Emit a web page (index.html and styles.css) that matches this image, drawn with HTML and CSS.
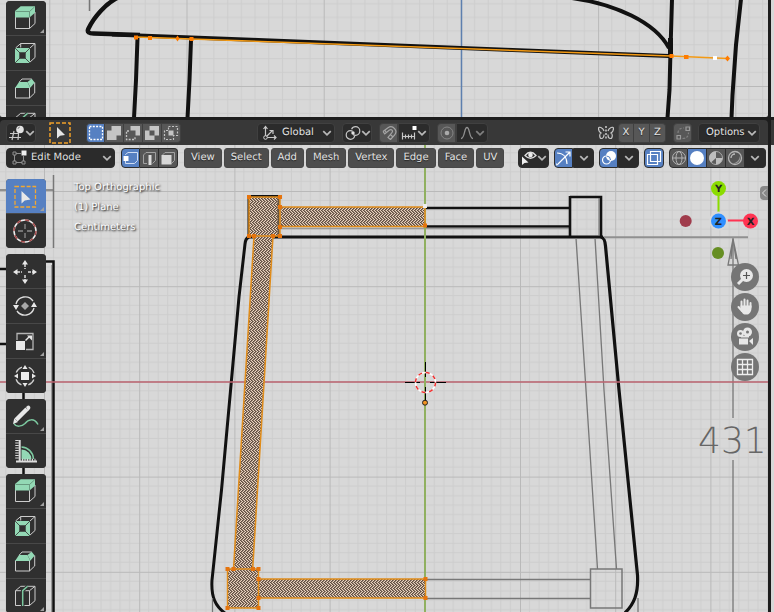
FILE: index.html
```html
<!DOCTYPE html>
<html lang="en">
<head>
<meta charset="utf-8">
<title>3D Viewport</title>
<link rel="stylesheet" href="styles.css">
</head>
<body>
<svg class="defs" aria-hidden="true">
  <defs>
    <pattern id="grid-front" x="49.3" y="86" width="137.2" height="137.2" patternUnits="userSpaceOnUse">
      <path class="minor" d="M13.7 0V138M27.4 0V138M41.2 0V138M54.9 0V138M68.6 0V138M82.3 0V138M96 0V138M109.8 0V138M123.5 0V138M0 13.7H138M0 27.4H138M0 41.2H138M0 54.9H138M0 68.6H138M0 82.3H138M0 96H138M0 109.8H138M0 123.5H138"/>
      <path class="major" d="M.5 0V138M0 .5H138"/>
    </pattern>
    <pattern id="grid-top" x="44" y="191" width="95.2" height="95.2" patternUnits="userSpaceOnUse">
      <path class="minor" d="M9.5 0V96M19 0V96M28.5 0V96M38 0V96M47.6 0V96M57 0V96M66.6 0V96M76 0V96M85.6 0V96M0 9.5H96M0 19H96M0 28.5H96M0 38H96M0 47.6H96M0 57H96M0 66.6H96M0 76H96M0 85.6H96"/>
      <path class="major" d="M.5 0V96M0 .5H96"/>
    </pattern>
    <pattern id="face" width="3" height="6" patternUnits="userSpaceOnUse" shape-rendering="crispEdges">
      <rect width="3" height="6" fill="#ead3c0"/>
      <path fill="#5e4c40" d="M0 0h1v1h-1zM1 1h1v1h-1zM2 2h1v1h-1zM0 3h1v1h-1zM2 4h1v1h-1zM1 5h1v1h-1z"/>
      <path fill="#948070" d="M1 0h1v1h-1zM2 1h1v1h-1zM0 2h1v1h-1zM1 3h1v1h-1zM0 4h1v1h-1zM2 5h1v1h-1z"/>
    </pattern>
    <symbol id="chevron" viewBox="0 0 8 8"><path d="M1 2.5 4 5.5 7 2.5" fill="none" stroke="currentColor" stroke-width="1.4"/></symbol>
    <symbol id="extrude" viewBox="0 0 40 34">
      <path class="wire" d="M9.5 15.5v12h14v-12M23.5 27.500l5.500-5V11"/>
      <path class="mint" d="M9 10l5.700-4.700H29v6.400L23.500 16.500H9z"/>
      <path d="M9.500 10.500h14l5.200-4.700M23.500 10.500v6" fill="none" stroke="#5d8a72" stroke-width=".8"/>
    </symbol>
    <symbol id="inset" viewBox="0 0 40 34">
      <path class="wire" d="M9.500 12 14.700 7.500H29v14l-5.500 5M24 12l5-4.500M14.700 7.500v4"/>
      <path class="mint" d="M9 12h15v15H9z"/>
      <path d="M9 12l15 15M24 12 9 27" stroke="#303030" stroke-width=".8"/>
      <path d="M13.300 16.300h6.400v6.400h-6.400z" fill="#303030"/>
    </symbol>
    <symbol id="bevel" viewBox="0 0 40 34">
      <path class="wire" d="M9.500 16.500v10.500h14v-10.500M23.500 27l5.200-5V11.500M13.300 11 16 8h9.700M23.500 16.500l2-2"/>
      <path class="mint" d="M9 17l4-6h8.300l3.200 6zM21.500 11l4.200-3.200 3 3.700-4.200 5z"/>
    </symbol>
    <symbol id="loopcut" viewBox="0 0 40 34">
      <path class="wire" d="M9.500 11.700h14v14.800h-14zM9.500 11.700 14.700 7.300H29v14.400l-5.500 4.800M23.500 11.700 29 7.300"/>
      <path d="M16.700 27V11.700L21.700 7.200" fill="none" stroke="#303030" stroke-width="3.500"/>
      <path class="mint-line" d="M16.700 27V11.700L21.700 7.200"/>
    </symbol>
    <symbol id="corner" viewBox="0 0 4 4"><path d="M4 0v4H0z" fill="#a0a0a0"/></symbol>
  </defs>
</svg>

<main class="workspace">
  <div class="areas">
    <section class="viewport front" aria-label="Front view">
      <svg class="scene" viewBox="0 0 768 117" preserveAspectRatio="xMidYMid slice" aria-hidden="true">
        <rect x="-2000" y="-500" width="5000" height="1500" fill="url(#grid-front)"/>
        <path d="M461.500-500V1000" stroke="#5d7fae" stroke-width="1.500"/>
        <g class="soft">
          <path class="ink" stroke-width="4.500" d="M119-3C106 3 94 17 88.500 28.500c-2 4 1 5 5 5L140 35"/>
          <path class="ink" stroke-width="3.800" d="M572-2C615 4 655 22 669 48"/>
          <path class="ink" stroke-width="4" d="M112 34.500 205 38 669 56"/>
          <path class="ink" stroke-width="4" d="M137.500 38 136 80 134 118M191 40 189.500 80 187.500 118"/>
          <path class="ink" stroke-width="4" d="M672-1 670.500 50 669.500 90 667.500 118M741-1 736 45 732.500 95 731.500 118"/>
          <path class="ink" stroke-width="5" d="M670.500 38V58"/>
          <path class="pencil" d="M89.500 0V11"/>
        </g>
        <path d="M136 37 191.500 39 671 56 727.500 58.500" fill="none" stroke="#f39a14" stroke-width="1.600"/>
        <path fill="#ff7b00" d="M134 35.500h4v4h-4zM148 36h4v4h-4zM189.500 37h4v4h-4zM669.500 54h4v4h-4zM684 55h4.500v4h-4.500zM177.500 35.500l2 3-2 3-2-3zM727.500 55.500l2.500 3-2.500 3-2.500-3z"/>
        <path d="M713 56h4v4h-4z" fill="#fff"/>
      </svg>
      <div class="toolbar scrolled">
        <div class="tools">
          <button class="tool" aria-label="Extrude Region"><svg><use href="#extrude"/></svg><svg class="corner"><use href="#corner"/></svg></button>
          <button class="tool" aria-label="Inset Faces"><svg><use href="#inset"/></svg></button>
          <button class="tool" aria-label="Bevel"><svg><use href="#bevel"/></svg></button>
          <button class="tool" aria-label="Loop Cut"><svg><use href="#loopcut"/></svg></button>
        </div>
      </div>
    </section>

    <section class="editor">
      <header class="header">
        <button class="field editor-type" aria-label="Editor Type">
          <svg viewBox="0 0 16 16"><path d="M1 8.500h9M0 12.500h12M5 6 3 15M9.500 9 9 15" class="line"/><circle cx="11" cy="4.500" r="3.800" fill="#e2e2e2"/><path d="M9 4a2 2 0 0 1 2-2" stroke="#888" fill="none"/></svg>
          <svg class="chev"><use href="#chevron"/></svg>
        </button>
        <button class="active-tool" aria-label="Select Box"><svg viewBox="0 0 22 22"><rect x="1" y="1" width="20" height="20" fill="none" stroke="#f0a029" stroke-width="1.500" stroke-dasharray="4 2"/><path d="M8 5v11.500l3-2.700 5-.8z" fill="#e6e6e6"/></svg></button>
        <div class="segments select-modes">
          <button class="on" aria-label="Set"><svg viewBox="0 0 16 16"><rect x="1.500" y="1.500" width="13" height="13" fill="none" stroke="#fff" stroke-width="1.300" stroke-dasharray="2 1.300"/></svg></button>
          <button aria-label="Extend"><svg viewBox="0 0 16 16"><path d="M5.500 1H15v9.500h-4.500V15H1V5.500h4.500z" fill="#c4c4c4"/></svg></button>
          <button aria-label="Subtract"><svg viewBox="0 0 16 16"><path d="M5.500 1H15v9.500h-4.500v-5h-5z" fill="#c4c4c4"/><path d="M4 6H1.500v8.500H10V12" fill="none" stroke="#c4c4c4" stroke-width="1.300" stroke-dasharray="2 1.300"/></svg></button>
          <button aria-label="Difference"><svg viewBox="0 0 16 16"><path fill-rule="evenodd" d="M5.500 1H15v9.500h-4.500V15H1V5.500h4.500zM5.500 5.500v5h5v-5z" fill="#c4c4c4"/></svg></button>
          <button aria-label="Intersect"><svg viewBox="0 0 16 16"><path d="M5.500 5.500h5v5h-5z" fill="#c4c4c4"/><path d="M5.500 1.500h9v9h-4v4h-9v-9h4z" fill="none" stroke="#c4c4c4" stroke-width="1.200" stroke-dasharray="2 1.500"/></svg></button>
        </div>

        <div class="transform">
          <label class="field choice orientation">
            <svg viewBox="0 0 16 16"><path class="line" d="M3.500 2v10.500H14M3.500 12.500 10 6M1.500 4l2-2.500 2 2.500M12 10.500l2 2-2 2M7.500 5.500H11V9"/><circle cx="3.500" cy="12.500" r="1.800" fill="#2b2b2b" stroke="#d0d0d0"/></svg>
            <select aria-label="Transform Orientation"><option>Global</option></select>
            <svg class="chev"><use href="#chevron"/></svg>
          </label>
          <button class="field pivot" aria-label="Pivot Point">
            <svg viewBox="0 0 16 16"><g class="line"><circle cx="5.500" cy="10" r="4.300" stroke-dasharray="21 6" stroke-dashoffset="-1"/><circle cx="10.500" cy="6" r="4.300" stroke-dasharray="21 6" stroke-dashoffset="12"/></g><circle cx="8" cy="8" r="1.700" fill="#e2e2e2"/></svg>
            <svg class="chev"><use href="#chevron"/></svg>
          </button>
          <div class="joined">
            <button class="toggle" aria-label="Snap"><svg viewBox="0 0 16 16"><path d="M2 6.500 7 2.700a5 5 0 0 1 6.500 7.500L9.500 14.500M2 6.500l1.700 2.300L8.500 5c2-1.200 3.800.8 2.500 2.500L7 12.500l2.500 2M11.500 11.500 9.500 9.700M5.500 8 4 5.500" fill="none" stroke="#a4a4a4" stroke-width="1.200"/></svg></button>
            <button class="field snap-to" aria-label="Snap To"><svg viewBox="0 0 16 16"><path class="line" d="M1.500 7.500v7M1.500 11.500h12M4.500 9.500v4M7.500 9.500v4M10.500 9.500v4M13.500 7.500v7"/><path d="M11.500 1h4v4h-4z" fill="#fff"/></svg><svg class="chev"><use href="#chevron"/></svg></button>
          </div>
          <div class="joined">
            <button class="toggle" aria-label="Proportional Editing"><svg viewBox="0 0 16 16"><circle cx="8" cy="8" r="6" fill="none" stroke="#858585"/><circle cx="8" cy="8" r="2.300" fill="#aaa"/></svg></button>
            <button class="field falloff" aria-label="Falloff"><svg viewBox="0 0 16 16"><path d="M2 13.500C6 13.500 5 2.500 8 2.500s2 11 6 11" fill="none" stroke="#909090" stroke-width="1.300"/></svg><svg class="chev"><use href="#chevron"/></svg></button>
          </div>
        </div>

        <div class="mesh-options">
          <svg class="butterfly" viewBox="0 0 16 16" aria-hidden="true"><path d="M6 6C5 2.500.500 1 .5 3.500.500 5.500 1.500 7 3 8 1 9 1.500 13.500 3.500 13.500c1.500 0 2.500-2 2.500-4M10 6C11 2.500 15.500 1 15.500 3.500c0 2-1 3.500-2.500 4.500 2 1 1.500 5.500-.5 5.500-1.500 0-2.500-2-2.500-4" class="line"/><path d="M8 1v14" stroke="#eee" stroke-width="1.200" stroke-dasharray="2 1.500"/></svg>
          <div class="segments axes"><button>X</button><button>Y</button><button>Z</button></div>
          <button class="toggle auto" aria-label="Topology Mirror"><svg viewBox="0 0 16 16"><path d="M2 10.500h3.500V14H2zM11 2h3.500v3.500H11z" fill="none" stroke="#9a9a9a" stroke-width="1.200"/><path d="M3 8C3 5 5 3 9 3M7.500 13.500c4 0 6-2 6-6" fill="none" stroke="#808080" stroke-width="1.200" stroke-dasharray="2.500 1.500"/></svg></button>
          <button class="field options">Options<svg class="chev"><use href="#chevron"/></svg></button>
        </div>
      </header>

      <div class="viewport top">
        <svg class="scene" viewBox="0 145 768 467" preserveAspectRatio="xMidYMid slice" aria-hidden="true">
          <rect x="-2000" y="-1500" width="5000" height="4000" fill="url(#grid-top)"/>
          <g class="soft">
            <path class="pencil" stroke-width="2" d="M53.500 175V248M0 190H53"/>
            <path class="ink" d="M0 269H7M0 344H7M23.500 380V480" stroke-width="2.500"/>
            <path class="ink" stroke-width="2.500" d="M46 261.500h7.500V612"/>
            <path d="M51.500 265V612" stroke="#999"/>
            <path class="ink" stroke-width="3" d="M248 237H603"/>
            <path class="ink" stroke-width="3" d="M249 237C246 238 245.500 240 245 244L239 297 221.500 490 212 580C211 597 215 606 226 614"/>
            <path class="ink" stroke-width="3.200" d="M601 237C604 238 605 240 605.500 246L619 390 637.500 575C638.500 594 634 604 625 613"/>
            <path class="ink" stroke-width="2.500" d="M425 208H570M425 226.500H570"/>
            <path stroke="#9a9a9a" stroke-width="1.500" d="M280 228.500H570"/>
            <path class="ink" stroke-width="2.600" d="M570 197H601V237M570 196V238"/>
            <path d="M599 198V236" stroke="#666"/>
            <path stroke="#909090" stroke-width="2" d="M604 237.300H748"/>
            <path class="pencil thin" d="M576 238 586 390 597.500 569M595 238 604 390 616.500 569"/>
            <path class="pencil thin" d="M733 238V418M733 460V612M212.500 598V612M638 598V612"/>
            <path class="pencil thin" d="M733 239 728 265h10.500L733 239M733 239l-2 20M733 239l3 20"/>
            <path class="pencil" stroke-width="1.700" d="M425 579.500H590.500M425 598.500H590.500M590.500 569H622V608H590.500z"/>
            <path class="ink" d="M248.500 237V196H281" stroke-width="2"/>
          </g>
          <text class="dimension" x="698" y="453">431</text>
          <path d="M-2000 382H3000" stroke="#bd6570" stroke-width="1.500"/>
          <path d="M425-1000V2000" stroke="#90b060" stroke-width="2"/>
          <path fill="url(#face)" d="M249 197h31v39h-31zM280 207h145v19H280zM254 236h19L252.700 569H233.500zM227.500 569h31v39h-31zM258.500 579h167v19h-167z"/>
          <path stroke="#6a5640" stroke-width="2" d="M278.500 199V234"/>
          <path class="edge" d="M249 197h31v39h-31zM280 207h145v19.500H280M254 236 233.500 569M273 236 252.700 569M227.500 569h31v39h-31zM258.500 579h167v19h-167"/>
          <path fill="#e5740e" d="M247 195h4v4h-4zM278 195h4v4h-4zM278 205h4v4h-4zM278 225h4v4h-4zM247 234h4v4h-4zM252 234h4v4h-4zM271 234h4v4h-4zM278 234h4v4h-4zM423 223.500h4v4h-4zM225.500 567h4v4h-4zM231.500 567h4v4h-4zM251 567h4v4h-4zM256.500 567h4v4h-4zM256.500 577h4v4h-4zM256.500 596h4v4h-4zM225.500 606h4v4h-4zM256.500 606h4v4h-4zM423.500 577h4v4h-4zM423.500 596h4v4h-4z"/>
          <path d="M423 204h4v4h-4z" fill="#eee"/>
          <path d="M425.500 362v15M425.500 387v16M405 382.500h15M430 382.500h16" stroke="#000"/>
          <circle cx="425.500" cy="382.500" r="10" fill="none" stroke="#fff" stroke-width="1.500"/>
          <circle cx="425.500" cy="382.500" r="10" fill="none" stroke="#f03030" stroke-width="1.500" stroke-dasharray="4 3.850"/>
          <circle cx="425" cy="402.700" r="2.500" fill="#f29322" stroke="#222"/>
        </svg>

        <div class="viewport-header">
          <label class="field choice mode">
            <svg viewBox="0 0 16 16"><path d="M5 3.500h5M3.500 5v6M5 12.500h6M12.500 6v5" stroke="#8f8f8f"/><path d="M2 2h3v3H2zM2 11h3v3H2zM11 11h3v3h-3z" fill="none" stroke="#8f8f8f"/><path d="M10.500.500h5v5h-5z" fill="#eee"/></svg>
            <select aria-label="Mode"><option>Edit Mode</option></select>
            <svg class="chev"><use href="#chevron"/></svg>
          </label>
          <div class="segments elements">
            <button class="on" aria-label="Vertex select"><svg viewBox="0 0 16 16"><path d="M2.500 5V4.500L5 2.500h9.500v8l-3 3h-9V11" fill="none" stroke="#cfdcf2"/><path d="M.500 6h5v5h-5z" fill="#fff"/></svg></button>
            <button aria-label="Edge select"><svg viewBox="0 0 16 16"><path d="M6 13.500H2.500V5L5 2.500h9.500v8l-3 3" fill="none" stroke="#a2a2a2"/><path d="M7.500 5h3v10h-3z" fill="#ddd"/></svg></button>
            <button aria-label="Face select"><svg viewBox="0 0 16 16"><path d="M2.500 5 5 2.500h9.500v8l-3 3" fill="none" stroke="#a2a2a2"/><path d="M1.500 5h10v9.500h-10z" fill="#d6d6d6"/></svg></button>
          </div>
          <nav class="menus">
            <button>View</button><button>Select</button><button>Add</button><button>Mesh</button><button>Vertex</button><button>Edge</button><button>Face</button><button>UV</button>
          </nav>
          <div class="display">
            <button class="field visibility" aria-label="Object Types Visibility"><svg viewBox="0 0 16 16"><path d="M4 5.500Q9.500-1 15 5.500 9.500 11 4 5.500z" fill="none" stroke="#ddd" stroke-width="1.300"/><circle cx="9.500" cy="5" r="2.300" fill="#eee"/><path d="M1 6.500v8.500l2.500-2 4-.5z" fill="#eee"/></svg><svg class="chev"><use href="#chevron"/></svg></button>
            <div class="joined"><button class="toggle on" aria-label="Gizmos"><svg viewBox="0 0 16 16"><path d="M1 3c6 0 10 4 10 11M2 14 14 2M9.500 2H14v4.500" fill="none" stroke="#fff" stroke-width="1.200"/><path d="M0 15.500l2.500-.5L.500 13z" fill="#fff"/></svg></button><button class="field drop" aria-label="Gizmo settings"><svg class="chev"><use href="#chevron"/></svg></button></div>
            <div class="joined"><button class="toggle on" aria-label="Overlays"><svg viewBox="0 0 16 16"><circle cx="10" cy="6" r="5" fill="#fff"/><circle cx="5.500" cy="10" r="4" fill="none" stroke="#fff" stroke-width="1.200"/><path d="M5.500 6a4 4 0 0 1 4 4" stroke="#5680c2" fill="none"/></svg></button><button class="field drop" aria-label="Overlay settings"><svg class="chev"><use href="#chevron"/></svg></button></div>
            <button class="toggle on xray" aria-label="X-Ray"><svg viewBox="0 0 16 16"><path d="M4.500 1.500h10v10h-10zM1.500 4.500h10v10h-10z" fill="none" stroke="#fff" stroke-width="1.200"/></svg></button>
            <div class="segments shading">
              <button aria-label="Wireframe"><svg viewBox="0 0 16 16"><g fill="none" stroke="#b4b4b4"><circle cx="8" cy="8" r="6.500"/><ellipse cx="8" cy="8" rx="3" ry="6.500"/><path d="M1.500 8h13"/></g></svg></button>
              <button class="on" aria-label="Solid"><svg viewBox="0 0 16 16"><circle cx="8" cy="8" r="7" fill="#fff"/></svg></button>
              <button aria-label="Material Preview"><svg viewBox="0 0 16 16"><circle cx="8" cy="8" r="6.500" fill="#5c5c5c" stroke="#aaa"/><path d="M8 8V1.500A6.500 6.500 0 0 0 3 12.500zM8 8h6.500A6.500 6.500 0 0 1 8 14.500z" fill="#bdbdbd"/></svg></button>
              <button aria-label="Rendered"><svg viewBox="0 0 16 16"><circle cx="8" cy="8" r="6.500" fill="#555" stroke="#b4b4b4" stroke-width="1.300"/><path d="M4 8a4 4 0 0 1 4-4" fill="none" stroke="#bbb" stroke-width="1.300"/><path d="M13 6a6 6 0 0 1-7 7.500Q12 12 13 6z" fill="#999"/></svg></button>
              <button class="field drop" aria-label="Shading settings"><svg class="chev"><use href="#chevron"/></svg></button>
            </div>
          </div>
        </div>

        <div class="viewport-body">
          <div class="toolbar">
            <div class="tools">
              <button class="tool on" aria-label="Select Box"><svg viewBox="0 0 40 34"><rect x="9" y="7.500" width="20.500" height="20.500" fill="none" stroke="#f3a832" stroke-width="1.300" stroke-dasharray="4 1.800"/><path d="M15.500 12v12.500l3.300-3 5.700-1z" fill="#e8e8e8"/></svg><svg class="corner"><use href="#corner"/></svg></button>
              <button class="tool" aria-label="Cursor"><svg viewBox="0 0 40 34"><circle cx="19" cy="17" r="11" fill="none" stroke="#eee" stroke-width="1.500"/><circle cx="19" cy="17" r="11" fill="none" stroke="#a34a4a" stroke-width="1.500" stroke-dasharray="4.300 4.300"/><path d="M19 10v5M19 19v5M12 17h5M21 17h5" stroke="#8d8d8d" stroke-width="1.300"/></svg></button>
            </div>
            <div class="tools">
              <button class="tool" aria-label="Move"><svg viewBox="0 0 40 34"><path d="M19 10v5M19 21v5M11 18h5M22 18h5" stroke="#ddd" stroke-width="1.500" stroke-dasharray="3 1"/><path d="M19 6l3 4.500h-6zM19 30l3-4.500h-6zM7 18l4.500-3v6zM31 18l-4.500-3v6z" fill="#e8e8e8"/></svg></button>
              <button class="tool" aria-label="Rotate"><svg viewBox="0 0 40 34"><path d="M10 15a9.500 9.500 0 0 1 17-3M28 19a9.500 9.500 0 0 1-17 3" fill="none" stroke="#ddd" stroke-width="1.400"/><path d="M7 16h6l-3 5zM25 18h6l-3-5z" fill="#e8e8e8"/><path d="M19 13l4 4-4 4-4-4z" fill="#a8a8a8"/></svg></button>
              <button class="tool" aria-label="Scale"><svg viewBox="0 0 40 34"><path d="M11 16V9.500h16v16h-7" fill="none" stroke="#b5b5b5" stroke-width="1.300"/><path d="M10 17h9v9h-9z" fill="#e8e8e8"/><path d="M19.500 16.500l4-4" stroke="#e8e8e8" stroke-width="1.500"/><path d="M21 11.500h5v5z" fill="#e8e8e8"/></svg><svg class="corner"><use href="#corner"/></svg></button>
              <button class="tool" aria-label="Transform"><svg viewBox="0 0 40 34"><circle cx="19" cy="17" r="9.500" fill="none" stroke="#ccc" stroke-width="1.300" stroke-dasharray="8 6.920" stroke-dashoffset="-3.500"/><path d="M15 13h8v8h-8z" fill="#eee"/><path d="M19 6l2.500 4h-5zM19 28l2.500-4h-5zM8 17l4-2.500v5zM30 17l-4-2.500v5z" fill="#e8e8e8"/></svg></button>
            </div>
            <div class="tools">
              <button class="tool" aria-label="Annotate"><svg viewBox="0 0 40 34"><path class="mint-line" d="M8 24.500c2 4 8 3 11 0 3-4 9-6 13 1"/><path d="M10 21 21 10" stroke="#e8e8e8" stroke-width="4.500"/><path d="M7 25l1.200-5.500L12 23zM20 8l2-1.500c2 0 3 2 2 3.500L22 12z" fill="#e8e8e8"/></svg><svg class="corner"><use href="#corner"/></svg></button>
              <button class="tool" aria-label="Measure"><svg viewBox="0 0 40 34"><path class="mint" d="M15.500 15.500a10 10 0 0 1 10 10h-10z"/><path class="mint-line" d="M15.500 13a12.500 12.500 0 0 1 12 12"/><path d="M13.700 6v22M10 27.500h21" stroke="#ddd" stroke-width="2"/><path d="M11 6v19" stroke="#ddd" stroke-width="3.500" stroke-dasharray="1 1.500"/><path d="M16 26h15" stroke="#ddd" stroke-width="2.500" stroke-dasharray="1 1.500"/></svg></button>
            </div>
            <div class="tools">
              <button class="tool" aria-label="Extrude Region"><svg><use href="#extrude"/></svg><svg class="corner"><use href="#corner"/></svg></button>
              <button class="tool" aria-label="Inset Faces"><svg><use href="#inset"/></svg></button>
              <button class="tool" aria-label="Bevel"><svg><use href="#bevel"/></svg></button>
              <button class="tool" aria-label="Loop Cut"><svg><use href="#loopcut"/></svg><svg class="corner"><use href="#corner"/></svg></button>
            </div>
          </div>
          <div class="info"><p>Top Orthographic</p><p>(1) Plane</p><p>Centimeters</p></div>
          <div class="navigation">
            <svg class="gizmo" viewBox="0 0 82 82" role="img" aria-label="Axes">
              <path d="M41.500 41V9" stroke="#8bdc00" stroke-width="2"/><path d="M41 41.500H74" stroke="#ff3352" stroke-width="2"/>
              <circle cx="8.700" cy="42" r="6" fill="#a03c4c"/><circle cx="41" cy="74" r="6" fill="#668e22"/>
              <circle cx="41.500" cy="42" r="9.500" fill="#d8d8d8"/>
              <circle cx="41.500" cy="9.500" r="7.500" fill="#8bdc00"/><circle cx="41.500" cy="42" r="7.500" fill="#2f8fff"/><circle cx="73.500" cy="42" r="7.500" fill="#ff3352"/>
              <text x="41.500" y="13">Y</text><text x="41.500" y="46">Z</text><text x="73.500" y="46">X</text>
            </svg>
            <button class="nav" aria-label="Zoom"><svg viewBox="0 0 28 28"><path d="M12 16 7 21" stroke="#e8e8e8" stroke-width="3"/><circle cx="15.500" cy="12.500" r="6.500" fill="#e8e8e8"/><path d="M15.500 9v7M12 12.500h7" stroke="#555" stroke-width="1.200"/></svg></button>
            <button class="nav" aria-label="Pan"><svg viewBox="0 0 28 28"><path d="M10.500 14V8.500M13.500 13V6.500M16.500 13V7.500M19.500 14V10M7.500 14l3.500 4" stroke="#e8e8e8" stroke-width="2" stroke-linecap="round"/><path d="M9.500 12.500h11c.5 5-1.500 8.500-4 9h-3c-2 0-4-4-4-9z" fill="#e8e8e8"/></svg></button>
            <button class="nav" aria-label="Camera view"><svg viewBox="0 0 28 28"><g fill="#e8e8e8"><circle cx="9.500" cy="10.500" r="3.500"/><circle cx="16.500" cy="9" r="4.500"/><path d="M8 15.500h9v6H8zM18 18l4-3v7zM10 13h8v1.500h-8z"/></g><circle cx="9.500" cy="10.500" r="1.300" fill="#777"/><circle cx="16.500" cy="9" r="1.500" fill="#777"/></svg></button>
            <button class="nav" aria-label="Orthographic"><svg viewBox="0 0 28 28"><path d="M6.500 6.500h15v15h-15zM11.500 6.500v15M16.500 6.500v15M6.500 11.500h15M6.500 16.500h15" fill="none" stroke="#eee" stroke-width="1.300"/></svg></button>
          </div>
          <button class="sidebar-tab" aria-label="Show sidebar"><svg viewBox="0 0 8 14"><path d="M6 3.500 2.500 7 6 10.500" fill="none" stroke="#ddd"/></svg></button>
        </div>
      </div>
    </section>
  </div>
  <aside class="neighbour" aria-label="Side view"><div class="side-view"></div><div class="side-header"></div><div class="side-view lower"></div></aside>
</main>
</body>
</html>
```
FILE: styles.css
```css
* { box-sizing: border-box; }

body {
  margin: 0;
  height: 100vh;
  overflow: hidden;
  background: #1d1d1d;
  color: #e4e4e4;
  font: 10px/14px "DejaVu Sans", sans-serif;
  text-rendering: geometricPrecision;
}

button, select {
  margin: 0;
  padding: 0;
  border: 0;
  background: none;
  color: inherit;
  font: inherit;
  text-rendering: inherit;
  text-shadow: 0 1px 1px #0008;
}

button { display: flex; align-items: center; justify-content: center; }
p { margin: 0; }
svg { display: block; flex: none; }

.defs { position: absolute; width: 0; height: 0; }

/* Workspace split */
.workspace { display: flex; gap: 3px; height: 100%; }
.areas { flex: 1; min-width: 0; display: flex; flex-direction: column; gap: 3px; }
.editor { flex: 1; min-height: 0; display: flex; flex-direction: column; }
.neighbour { width: 3px; display: flex; flex-direction: column; }
.side-view { flex: 0 0 117px; background: #d8d8d8; }
.side-header { height: 25px; margin-top: 3px; background: #383838; }
.side-view.lower { flex: 1; }

.viewport { position: relative; overflow: hidden; background: #d8d8d8; }
.viewport.front { flex: 0 0 117px; border-radius: 0 0 2px 2px; }
.viewport.top { flex: 1; min-height: 0; display: flex; flex-direction: column; gap: 11px; padding-top: 3px; }

/* Scene drawing */
.scene { position: absolute; inset: 0; width: 100%; height: 100%; }
.minor { stroke: #cdcdcd; }
.major { stroke: #b9b9b9; }
.soft { filter: blur(0.5px); fill: none; }
.ink { fill: none; stroke: #111; }
.pencil { fill: none; stroke: #777; stroke-width: 1.5; }
.thin { stroke-width: 1.3; }
.edge { fill: none; stroke: #e08c1a; stroke-width: 1.5; }
.dimension { font: 200 36px "DejaVu Sans", sans-serif; fill: #666; }

/* Icon strokes */
.wire { fill: none; stroke: #ccc; }
.mint { fill: #93d9b5; }
.mint-line { fill: none; stroke: #7cc9a0; stroke-width: 1.5; }
.line { fill: none; stroke: #c8c8c8; stroke-width: 1.2; }

/* Header */
.header {
  display: flex;
  align-items: center;
  height: 25px;
  padding: 1px 8px 0 6px;
  background: #383838;
  border-radius: 4px 4px 0 0;
}
.header svg, .viewport-header svg { width: 16px; height: 16px; }
.header .chev, .viewport-header .chev { width: 10px; height: 10px; color: #b8b8b8; }

.field, .toggle, .segments button, .menus button { height: 20px; border: 1px solid #404040; }
.field { background: #2b2b2b; border-radius: 4px; padding: 0 2px; justify-content: space-between; }
.toggle { width: 19px; background: #575757; border-radius: 4px; }
.toggle.on, .segments .on { background: #5680c2; }
.joined { display: flex; }
.joined .toggle { border-radius: 4px 0 0 4px; }
.joined .field { border-radius: 0 4px 4px 0; }

.segments { display: flex; }
.segments button { width: 19px; background: #575757; border-left-width: 0; }
.segments button:first-child { border-left-width: 1px; border-radius: 4px 0 0 4px; }
.segments button:last-child { border-radius: 0 4px 4px 0; }

.choice { display: flex; align-items: center; gap: 4px; }
.choice select { flex: 1; min-width: 0; height: 18px; appearance: none; outline: none; }

.editor-type { width: 30px; }
.active-tool { margin: 0 15px 0 13px; }
.header .active-tool svg { width: 22px; height: 22px; }
.transform { display: flex; gap: 7px; margin-left: 76px; }
.orientation { width: 78px; padding-left: 4px; }
.pivot { width: 30px; }
.snap-to, .falloff { width: 32px; }
.falloff .chev { opacity: 0.6; }
.mesh-options { display: flex; align-items: center; gap: 4px; margin-left: auto; }
.axes button { width: 16px; }
.header .auto { margin: 0 2px 0 3px; }
.options { width: 62px; padding: 0 2px 0 7px; }

/* Viewport header */
.viewport-header { position: relative; display: flex; gap: 6px; padding: 0 2px 0 6px; }
.viewport-header .field, .viewport-header .toggle, .viewport-header .segments button { border-color: #2d2d2d; }
.mode { width: 109px; padding-left: 4px; }
.menus { display: flex; gap: 2px; }
.menus button { padding: 0 6px; background: #4d4d4d; border-color: #484848; border-radius: 3px; }
.display { display: flex; gap: 5px; margin-left: auto; }
.visibility { width: 31px; }
.joined .drop { width: 21px; justify-content: center; }
.xray { width: 20px; }
.segments .drop { width: 21px; justify-content: center; background: #2b2b2b; }

/* Viewport body */
.viewport-body { position: relative; flex: 1; min-height: 0; display: flex; padding: 0 9px 0 6px; }
.toolbar { width: 40px; display: flex; flex-direction: column; gap: 6px; }
.toolbar.scrolled { position: relative; margin: 1px 0 0 6px; }
.tools {
  display: flex;
  flex-direction: column;
  gap: 1px;
  overflow: hidden;
  flex: none;
  background: #484848;
  border-radius: 4px;
}
.tool { position: relative; height: 34px; background: #303030; }
.tool.on { background: #5680c2; }
.tool svg { width: 40px; height: 34px; }
.tool .corner { position: absolute; right: 2px; bottom: 2px; width: 4px; height: 4px; }

.info { margin-left: 28px; font-size: 10px; line-height: 20px; color: #fff; text-shadow: 1px 1px 2px #000; }
.info p:first-child { margin-top: -1px; }

.navigation { margin-left: auto; display: flex; flex-direction: column; align-items: flex-end; gap: 2px; }
.gizmo { width: 82px; height: 82px; }
.gizmo text { font: bold 10px "DejaVu Sans", sans-serif; text-anchor: middle; fill: #222; }
.nav { width: 28px; height: 28px; border-radius: 50%; background: #757575; }
.nav svg { width: 28px; height: 28px; }
.sidebar-tab { position: absolute; top: 7px; right: 0; width: 8px; height: 14px; border-radius: 4px 0 0 4px; background: #888; }
.sidebar-tab svg { width: 8px; height: 14px; }
```
